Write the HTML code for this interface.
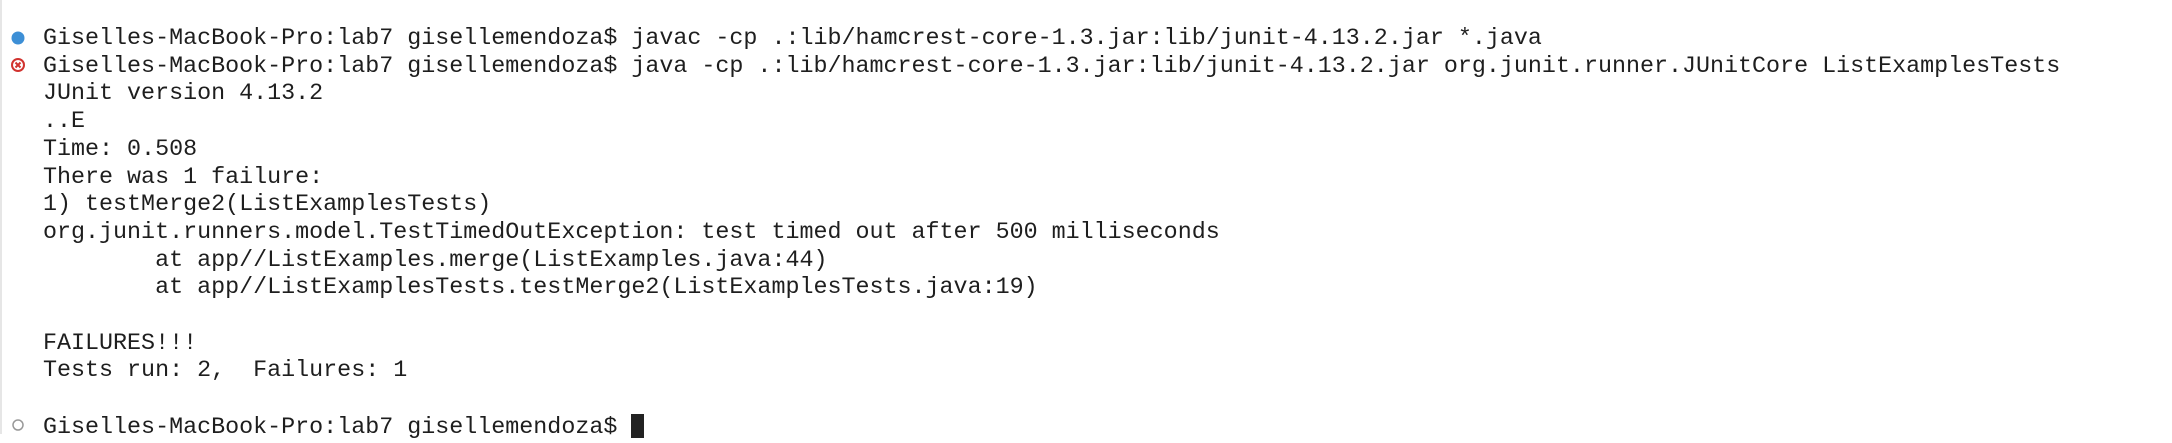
<!DOCTYPE html>
<html><head><style>
html,body{margin:0;padding:0;background:#fff;width:2172px;height:434px;overflow:hidden}
.t{position:absolute;left:43px;top:26px;font-family:"Liberation Mono",monospace;font-size:23.35px;line-height:27.7px;color:#1e1e1e;white-space:pre}
.l{position:absolute;left:0;top:0;width:2px;height:434px;background:#e6e6e6}
.cur{display:inline-block;width:13px;height:24px;background:#222;vertical-align:-5px}
</style></head><body>
<div class="l"></div>
<svg style="position:absolute;left:0;top:0" width="40" height="434">
<circle cx="18" cy="38" r="6.5" fill="#3d8fd6"/>
<circle cx="18" cy="65" r="6" fill="none" stroke="#d1332f" stroke-width="2"/>
<path d="M15.5 62.5l5 5M20.5 62.5l-5 5" stroke="#d1332f" stroke-width="2"/>
<circle cx="18" cy="425" r="5" fill="none" stroke="#999" stroke-width="1.5"/>
</svg>
<div class="t">Giselles-MacBook-Pro:lab7 gisellemendoza$ javac -cp .:lib/hamcrest-core-1.3.jar:lib/junit-4.13.2.jar *.java
Giselles-MacBook-Pro:lab7 gisellemendoza$ java -cp .:lib/hamcrest-core-1.3.jar:lib/junit-4.13.2.jar org.junit.runner.JUnitCore ListExamplesTests
JUnit version 4.13.2
..E
Time: 0.508
There was 1 failure:
1) testMerge2(ListExamplesTests)
org.junit.runners.model.TestTimedOutException: test timed out after 500 milliseconds
        at app//ListExamples.merge(ListExamples.java:44)
        at app//ListExamplesTests.testMerge2(ListExamplesTests.java:19)

FAILURES!!!
Tests run: 2,  Failures: 1

Giselles-MacBook-Pro:lab7 gisellemendoza$ <span class="cur"></span></div>
</body></html>
